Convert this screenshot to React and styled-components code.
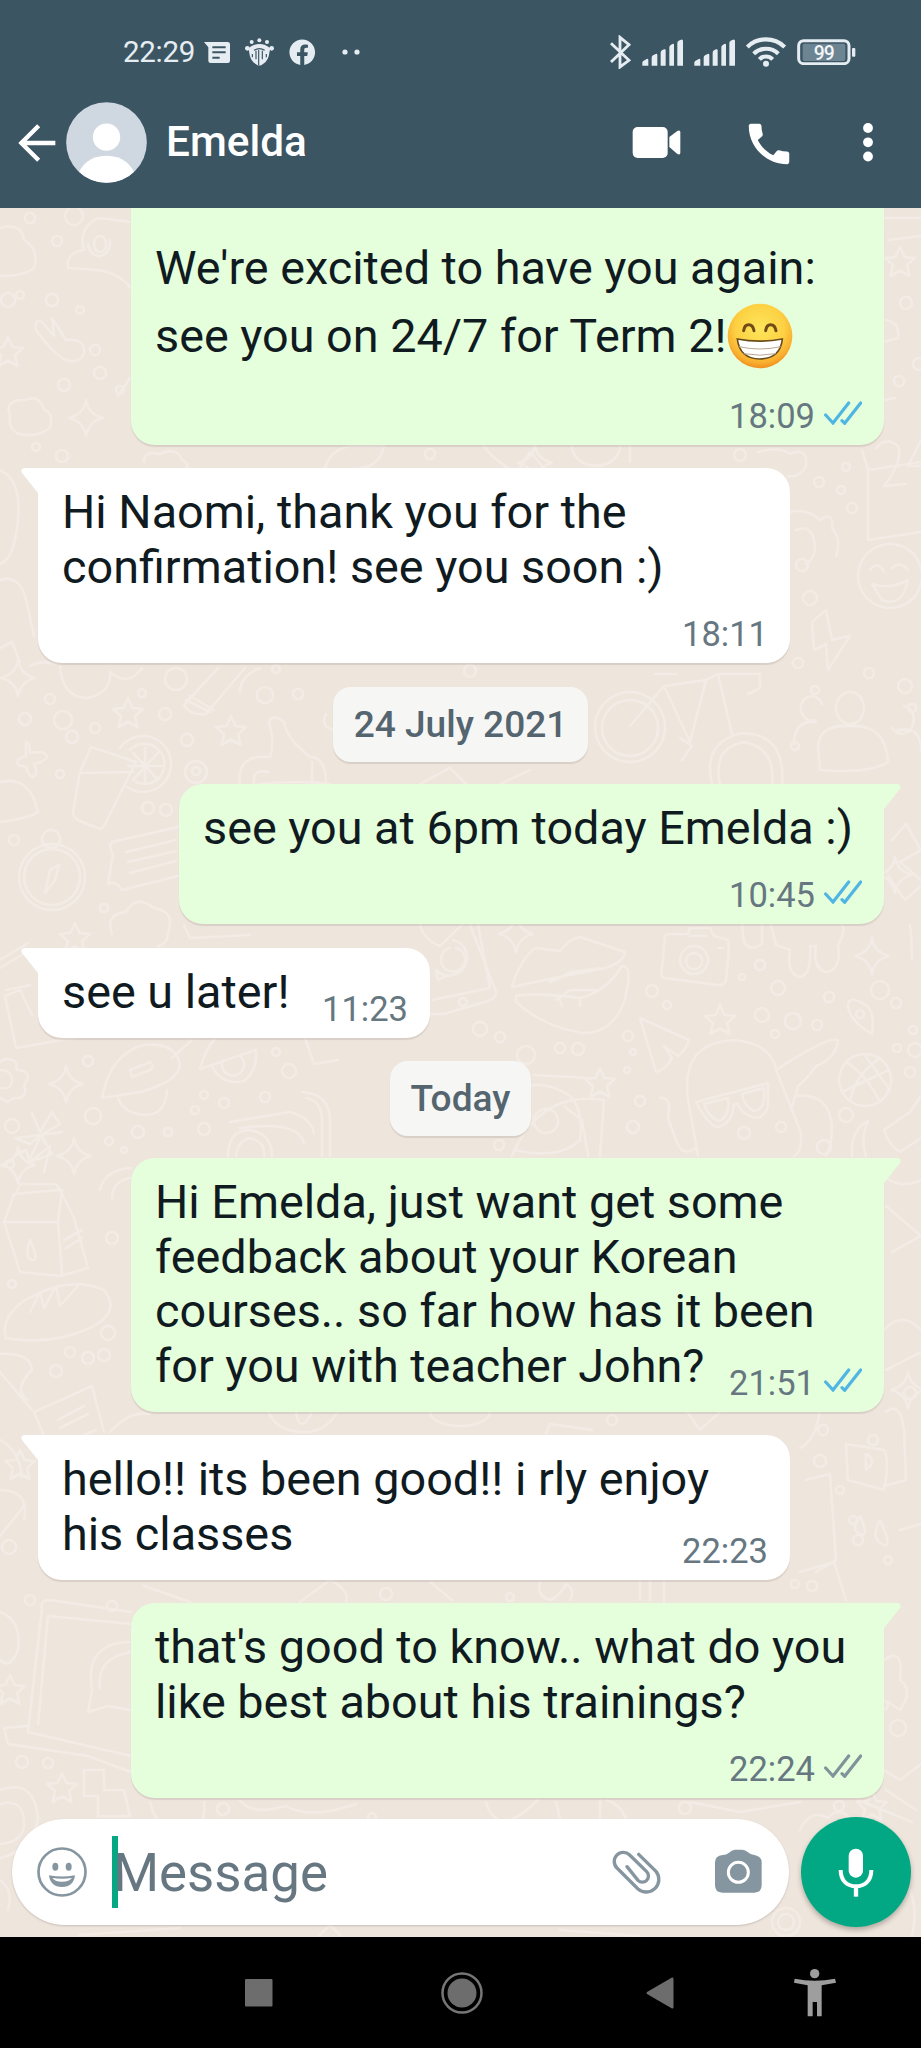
import React from 'react';
import styled, { createGlobalStyle } from 'styled-components';
import { FaFacebook } from 'react-icons/fa';
import { MdCall } from 'react-icons/md';

const GlobalStyle = createGlobalStyle`
  * {
    box-sizing: border-box;
  }
  body {
    margin: 0;
    font-family: Roboto, 'Noto Sans', sans-serif;
  }
  svg {
    display: block;
    flex-shrink: 0;
  }
`;

const Screen = styled.div`
  display: flex;
  flex-direction: column;
  width: 921px;
  height: 2048px;
  overflow: hidden;
  background-color: #000;
`;

const Header = styled.header`
  height: 208px;
  flex-shrink: 0;
  background-color: #3b5563;
  color: #fff;
`;

const StatusBar = styled.div`
  display: flex;
  align-items: center;
  justify-content: space-between;
  height: 102px;
  padding: 2px 65px 0 123px;
  color: #e6edf2;
`;

const StatusGroup = styled.div`
  display: flex;
  align-items: center;
  gap: ${props => props.gap};
`;

const Clock = styled.span`
  width: 66px;
  font-size: 29.5px;
  letter-spacing: -0.3px;
  line-height: 34px;
  white-space: nowrap;
`;

const MoreDots = styled.svg`
  margin-left: 10px;
`;

const AppBar = styled.div`
  display: flex;
  align-items: center;
  height: 81px;
  padding: 0 48px 0 18px;
`;

const Avatar = styled.div`
  margin: 0 19px 0 10px;
`;

const ContactName = styled.h1`
  flex: 1;
  margin: 0 0 1px;
  font-size: 42.3px;
  font-weight: 500;
  line-height: 50px;
`;

const Actions = styled.div`
  display: flex;
  align-items: center;
`;

const CallButton = styled.span`
  display: flex;
  margin: 2px 67px 0 61px;
`;

const Chat = styled.main`
  position: relative;
  display: flex;
  flex-direction: column;
  height: 1729px;
  flex-shrink: 0;
  background-color: #eee5dd;
`;

const Wallpaper = styled.svg`
  position: absolute;
  left: 0;
  top: 0;
  fill: none;
  stroke: #f3ebe5;
  stroke-width: 2.6px;
  stroke-linejoin: round;
  stroke-linecap: round;
`;

const Messages = styled.div`
  position: relative;
  display: flex;
  flex: 1;
  flex-direction: column;
  gap: 23.5px;
`;

const Bubble = styled.article`
  position: relative;
  display: grid;
  align-self: ${props => (props.$out ? 'flex-end' : 'flex-start')};
  width: ${props => props.$size};
  margin: ${props => (props.$out ? '0 37px 0 0' : '0 0 0 38px')};
  padding: ${props => (props.$cut ? '33px' : '17px')} 0 0 24px;
  background-color: ${props => (props.$out ? '#e5fedb' : '#fff')};
  border-radius: ${props => (props.$out ? '24px 0 24px 24px' : '0 24px 24px 24px')};
  ${props => props.$cut && 'border-radius: 0 0 24px 24px;'}
  box-shadow: 0 2px 1px rgba(90, 80, 70, 0.14);
`;

const Tail = styled.svg`
  position: absolute;
  top: 0;
  ${props => (props.$out ? 'right: -17px;' : 'left: -17px;')}
  fill: ${props => (props.$out ? '#e5fedb' : '#fff')};
  ${props => !props.$out && 'transform: scaleX(-1);'}
`;

const Text = styled.div`
  grid-area: 1 / 1;
  padding-bottom: ${props => (props.$tall ? '69px' : '18.5px')};
  font-size: 46.75px;
  line-height: 54.5px;
  color: #101b21;
  white-space: pre;
`;

const Line = styled.p`
  width: fit-content;
  margin: 0;
`;

const EmojiLine = styled(Line)`
  display: flex;
  align-items: center;
  height: 70px;
  margin: 5.5px 0 4.5px;
`;

const Meta = styled.div`
  grid-area: 1 / 1;
  align-self: end;
  justify-self: end;
  display: flex;
  align-items: flex-end;
  gap: 9px;
  padding: 0 22px 9px 0;
  font-size: 34.5px;
  line-height: 40px;
  color: #667781;
  svg {
    margin-bottom: 11px;
  }
`;

const DatePill = styled.div`
  align-self: center;
  height: 75px;
  margin-bottom: -1.5px;
  padding: 0 21px;
  border-radius: 18px;
  background-color: #f6f7f5;
  box-shadow: 0 2px 1px rgba(90, 80, 70, 0.14);
  font-size: 37.1px;
  font-weight: 500;
  line-height: 75px;
  color: #54656f;
`;

const Composer = styled.footer`
  position: relative;
  display: flex;
  align-items: center;
  gap: 12px;
  height: 110px;
  margin: 0 10px 10px 12px;
`;

const InputBox = styled.div`
  display: flex;
  align-items: center;
  width: 777px;
  height: 106px;
  padding: 0 27px 0 25px;
  border-radius: 53px;
  background-color: #fff;
  box-shadow: 0 1px 2px rgba(90, 80, 70, 0.25);
`;

const Caret = styled.span`
  width: 6px;
  height: 72px;
  margin: 0 -5px 0 25px;
  background-color: #06a783;
`;

const Placeholder = styled.span`
  flex: 1;
  padding-top: 2px;
  font-size: 52.8px;
  line-height: 64px;
  color: #667781;
`;

const CameraButton = styled.span`
  margin: 0 0 3px 53px;
`;

const MicButton = styled.div`
  display: flex;
  align-items: center;
  justify-content: center;
  width: 110px;
  height: 110px;
  border-radius: 50%;
  background-color: #02a884;
  box-shadow: 0 3px 5px rgba(60, 60, 50, 0.35);
`;

const NavBar = styled.nav`
  display: flex;
  align-items: center;
  height: 111px;
  padding-left: 244.5px;
  background-color: #000;
`;

const NavItem = styled.span`
  margin-right: ${props => props.$space || '0'};
`;

const NotificationIcons = () => (
  <React.Fragment>
    <svg width="26" height="21" viewBox="612 123 78 63">
      <path d="M612 123H683Q690 123 690 130V179Q690 186 683 186H632Q625 186 625 179V139Z" fill="currentColor" />
      <path d="M637 139H677M637 154H677M637 170H659" stroke="#3b5563" strokeWidth="6" />
    </svg>
    <svg width="29" height="28" viewBox="735 112 87 84">
      <g fill="currentColor">
        <circle cx="755" cy="124" r="6" />
        <circle cx="778" cy="119" r="6" />
        <circle cx="801" cy="124" r="6" />
        <circle cx="742" cy="143" r="7" />
        <circle cx="815" cy="143" r="7" />
        <path d="M745 143Q760 130 778 130T811 143L809 151Q806 181 789 190Q778 199 767 190Q750 181 747 151Z" />
      </g>
      <path
        d="M762 149Q778 139 794 149M768 150V176M776 148V194M787 150V176M757 160V170M799 160V170"
        fill="none"
        stroke="#3b5563"
        strokeWidth="3.5"
      />
    </svg>
    <FaFacebook size={26.5} />
    <MoreDots width="20" height="8" viewBox="0 0 20 8" fill="currentColor">
      <circle cx="4" cy="4" r="2.6" />
      <circle cx="16" cy="4" r="2.6" />
    </MoreDots>
  </React.Fragment>
);

const SignalIcon = () => (
  <svg width="41" height="27" viewBox="546 115 123 81" fill="currentColor">
    <path d="M547 195V186Q547 182 551 180L560 175Q565 173 565 178V195ZM575 195V171Q575 167 579 164L587 160Q592 158 592 163V195ZM602 195V156Q602 152 606 149L612 146Q617 144 617 149V195ZM628 195V140Q628 136 632 133L637 130Q642 128 642 133V195ZM652 195V127Q652 123 656 120L663 117Q669 115 669 121V195Z" />
  </svg>
);

const BluetoothIcon = () => (
  <svg width="21" height="34" viewBox="449 102 63 102" fill="none" stroke="currentColor" strokeWidth="8.5">
    <path d="M452 127L506 178L479 198V109L506 131L452 183" />
  </svg>
);

const WifiIcon = () => (
  <svg width="40" height="30" viewBox="854 109 120 90" fill="none" stroke="currentColor" strokeWidth="12.5">
    <path d="M858 139A80 80 0 0 1 970 139M877 159A54 54 0 0 1 951 159M894 176A28 28 0 0 1 934 176" />
    <circle cx="914" cy="189" r="9" fill="currentColor" stroke="none" />
  </svg>
);

const BatteryIcon = () => (
  <svg width="59" height="26" viewBox="1011 114 177 78">
    <rect x="1028" y="128" width="128" height="52" rx="5" fill="#6d8492" />
    <rect x="1016" y="119" width="151" height="69" rx="15" fill="none" stroke="currentColor" strokeWidth="9" />
    <rect x="1176" y="141" width="10" height="26" rx="3" fill="currentColor" />
    <text x="1091" y="177" fill="#f2f6f8" fontSize="58" fontWeight="500" textAnchor="middle" letterSpacing="-3">
      99
    </text>
  </svg>
);

const BackIcon = () => (
  <svg width="38" height="38" viewBox="56 371 114 114" fill="none" stroke="#fff" strokeWidth="13">
    <path d="M168 428H66M118 376L66 428L118 480" />
  </svg>
);

const Person = () => (
  <svg width="81" height="81" viewBox="198.500 306.500 243 243">
    <clipPath id="avatar">
      <circle cx="320" cy="428" r="121" />
    </clipPath>
    <circle cx="320" cy="428" r="121" fill="#cfd8e0" />
    <circle cx="320" cy="412" r="41" fill="#fff" />
    <path d="M228 540Q250 468 320 468T412 540V560H228Z" fill="#fff" clipPath="url(#avatar)" />
  </svg>
);

const VideoIcon = () => (
  <svg width="49" height="31" viewBox="519 384 147 93" fill="#fff">
    <rect x="521" y="384" width="105" height="93" rx="15" />
    <path d="M631 414L655 396Q664 392 664 400V461Q664 469 655 465L631 444Z" />
  </svg>
);

const MoreIcon = () => (
  <svg width="10" height="39" viewBox="0 0 10 39" fill="#fff">
    <circle cx="5" cy="5" r="4.9" />
    <circle cx="5" cy="19.3" r="4.9" />
    <circle cx="5" cy="33.5" r="4.9" />
  </svg>
);

const Ticks = ({ read }) => (
  <svg
    width="38"
    height="24"
    viewBox="328 332 114 72"
    fill="none"
    stroke={read ? '#4fb6e3' : '#80939b'}
    strokeWidth="9.5"
    strokeLinecap="round"
  >
    <path d="M333 374L355 398L402 338M382 391L390 399L438 338" />
  </svg>
);

const GrinEmoji = () => (
  <svg width="66" height="66" viewBox="48 39 198 198">
    <defs>
      <radialGradient id="face" cx="0.5" cy="0.38" r="0.63">
        <stop offset="0" stopColor="#fde55a" />
        <stop offset="0.6" stopColor="#fdd143" />
        <stop offset="0.85" stopColor="#f9ae2f" />
        <stop offset="1" stopColor="#ee8a1d" />
      </radialGradient>
    </defs>
    <circle cx="147" cy="138" r="97" fill="url(#face)" />
    <path
      d="M98 122Q100 104 113 104T129 122M164 122Q166 104 179 104T195 122"
      fill="none"
      stroke="#704b15"
      strokeWidth="9"
      strokeLinecap="round"
    />
    <path d="M79 147Q146 160 214 147Q208 206 146 207Q86 206 79 147Z" fill="#fff" stroke="#6b4d1b" strokeWidth="5" />
    <path d="M84 170Q146 184 209 170M98 191Q146 200 195 191" fill="none" stroke="#b9a894" strokeWidth="3" />
  </svg>
);

const SmileIcon = () => (
  <svg width="50" height="50" viewBox="111 171 150 150">
    <circle cx="186" cy="246" r="70.5" fill="none" stroke="#8696a0" strokeWidth="8" />
    <g fill="#8696a0">
      <ellipse cx="166" cy="230" rx="9" ry="12" />
      <ellipse cx="206" cy="230" rx="9" ry="12" />
      <path d="M147 256Q186 263 225 256Q221 291 186 291T147 256Z" />
    </g>
    <path d="M157 264Q186 269 216 264Q208 275 186 275T157 264Z" fill="#fff" />
  </svg>
);

const ClipIcon = () => (
  <svg
    width="50"
    height="45"
    viewBox="456 180 150 135"
    fill="none"
    stroke="#8696a0"
    strokeWidth="10"
    strokeLinecap="round"
  >
    <path d="M536 193L588 244A38 38 0 0 1 534 297L471 234A27 27 0 0 1 509 195L560 245A18 18 0 0 1 534 271L501 230" />
  </svg>
);

const CameraIcon = () => (
  <svg width="47" height="44" viewBox="769 175 141 132">
    <path
      d="M792 193Q803 193 811 186T828 177H851Q860 177 868 185T887 193Q909 197 909 215V284Q909 306 887 306H791Q769 306 769 284V215Q769 195 792 193Z"
      fill="#8696a0"
    />
    <circle cx="839" cy="245" r="30" fill="#8696a0" stroke="#fff" strokeWidth="9" />
  </svg>
);

const MicIcon = () => (
  <svg width="36" height="49" viewBox="1135 172 108 147">
    <rect x="1167" y="174" width="43" height="87" rx="21" fill="#fff" />
    <path d="M1143 238C1143 272 1164 287 1189 287S1235 272 1235 238" fill="none" stroke="#fff" strokeWidth="12" />
    <path d="M1189 287V318" stroke="#fff" strokeWidth="13" />
  </svg>
);

const starPath = 'M0 -15L4.5 -5L15 -4L7 3L9.5 14L0 8.5L-9.5 14L-7 3L-15 -4L-4.5 -5Z';
const sparklePath = 'M0 -18Q2 -4 17 0Q3 3 0 18Q-3 3 -17 0Q-2 -4 0 -18Z';

const stars = [
  [128, 713], [231, 731], [75, 938], [720, 1020], [600, 1083], [900, 262], [8, 352], [62, 1788],
  [10, 1690], [20, 1465], [872, 1806],
];

const sparkles = [
  [18, 678], [66, 1084], [74, 1156], [872, 956], [516, 934], [86, 418], [18, 1165], [908, 1390],
  [535, 463], [895, 875],
];

// x, y, radius
const rings = [
  [25, 719, 6], [63, 720, 9], [50, 699, 5], [95, 728, 5], [72, 737, 6], [60, 774, 4], [14, 840, 5],
  [165, 714, 6], [142, 693, 4], [176, 679, 11], [187, 740, 6], [196, 772, 11], [196, 771, 4],
  [265, 695, 8], [298, 694, 5], [276, 669, 4], [148, 808, 6], [166, 810, 6], [104, 908, 4],
  [88, 1061, 5], [93, 1116, 8], [12, 1126, 7], [204, 1095, 4], [224, 1103, 5], [265, 1097, 5],
  [289, 1071, 7], [276, 1052, 4], [195, 1110, 4], [138, 1132, 6], [168, 1132, 4], [204, 1129, 6],
  [109, 1141, 4], [124, 1150, 3], [10, 1164, 4], [480, 1029, 7], [500, 1037, 5], [526, 1055, 9],
  [560, 1048, 5], [578, 1049, 6], [652, 991, 6], [667, 1005, 4], [628, 1036, 5], [633, 1052, 3],
  [627, 1070, 3], [760, 965, 5], [742, 977, 3], [778, 988, 7], [829, 997, 5], [880, 990, 9],
  [896, 1003, 5], [762, 1015, 7], [793, 1021, 8], [775, 1034, 4], [817, 1025, 5], [913, 1030, 4],
  [897, 1048, 4], [915, 1050, 7], [910, 1072, 5], [640, 1101, 5], [633, 1127, 6], [744, 1133, 6],
  [781, 1127, 5], [846, 1115, 7], [824, 1147, 7], [499, 1145, 5], [20, 295, 4], [52, 300, 6],
  [80, 310, 4], [95, 350, 5], [64, 385, 6], [100, 373, 6], [120, 390, 4], [36, 447, 4], [62, 456, 6],
  [8, 300, 7], [906, 303, 6], [919, 364, 6], [899, 381, 5], [740, 455, 6], [846, 467, 4],
  [819, 482, 5], [841, 490, 4], [852, 508, 5], [802, 565, 6], [810, 598, 7], [798, 663, 5],
  [815, 690, 4], [869, 673, 5], [905, 686, 7], [912, 708, 4], [795, 746, 4], [108, 1333, 7],
  [112, 1238, 6], [70, 1352, 5], [88, 1358, 6], [104, 1355, 6], [56, 1371, 6], [12, 1284, 4],
  [910, 1393, 6], [860, 1330, 5], [823, 1430, 5], [820, 1461, 6], [873, 1440, 5], [840, 1490, 4],
  [853, 1520, 4], [858, 1540, 5], [9, 1547, 7], [888, 1560, 4], [22, 1762, 6], [48, 1763, 5],
  [30, 1600, 5], [112, 1606, 5], [898, 1728, 8], [884, 1705, 4], [223, 1809, 6], [685, 1808, 6],
  [839, 1806, 5], [372, 1817, 4], [386, 1594, 6], [510, 1597, 4], [795, 1584, 4], [812, 1586, 5],
  [30, 218, 5], [57, 241, 5], [74, 216, 9], [612, 1420, 5], [430, 454, 5], [470, 671, 6],
];

const lineArt = [
  // drink with a slice of lemon
  'M91 747L80 772L73 812Q73 818 80 821L100 829Q104 828 107 820L136 762L91 747M82 773L133 772',
  'M120 748A28 28 0 1 1 127 787M130 750A20 20 0 1 1 136 782M145 748V784M128 766H162M133 753L158 780M158 753L133 780',
  // compass
  'M52 844A33 33 0 1 0 52.1 844M52 849A28 28 0 1 0 52.1 849M51 830A9 9 0 1 0 51.1 830M45 893L50 870L59 865L55 880Z',
  'M26 742Q30 742 30 753Q46 750 47 757Q46 761 34 764Q39 774 33 777Q28 776 26 766Q18 767 17 762Q18 758 26 756Z',
  // ticket
  'M178 827L112 842Q108 846 113 854L108 884Q116 880 122 890L178 876M126 852L176 840M128 862L176 851M130 873L176 861',
  'M0 782Q30 775 38 812Q30 818 0 822M112 934Q105 914 126 912Q136 894 154 908Q176 912 168 932Q168 944 158 946',
  // mitten and thumb
  'M60 666Q62 698 88 698Q112 692 110 672Q128 688 142 668M240 784Q236 754 270 757Q275 745 269 722Q272 713 284 722Q286 738 310 757Q326 757 326 784M254 784Q252 768 268 772M312 762V784',
  'M218 668L184 705Q190 716 206 714L245 668M190 696L214 710M186 700L210 712',
  'M0 960L28 943M0 968L32 949M5 996L20 990L32 1015M5 996L16 1048L84 1036M6 990L30 985M184 925L190 938L250 935',
  // planets
  'M102 1098Q110 1054 144 1045Q176 1042 180 1065Q178 1082 140 1092ZM118 1098Q124 1114 146 1115Q166 1114 167 1090M130 1070L150 1062Q156 1066 150 1070L132 1077Z',
  'M200 1069Q206 1048 214 1040M200 1069L256 1050M212 1066Q222 1086 244 1081Q258 1070 256 1050M223 1060A11 11 0 1 0 240 1056M172 1058L192 1040M305 1038L314 1064L338 1060',
  'M0 1062Q6 1056 16 1062L17 1070Q28 1070 28 1078L24 1086Q28 1094 20 1098L14 1098L8 1102L0 1098M0 1070Q12 1070 12 1080T0 1088',
  'M32 1113L40 1132L52 1112L60 1124L41 1135L62 1132M41 1135L15 1138L30 1144L41 1135L28 1163L52 1154Z',
  // roller skate
  'M228 1156Q228 1130 250 1130Q272 1134 272 1156M236 1156Q238 1140 250 1138Q266 1142 264 1156M230 1122L290 1112Q312 1118 314 1134M240 1128Q300 1120 304 1144M302 1092Q330 1094 330 1120V1156M306 1098Q322 1100 322 1122V1156',
  // phone
  'M470 925L496 992Q496 998 488 1001L444 1014L430 1014M478 925L490 988L432 1000M453 940A18 18 0 1 1 436 970L438 980L446 976M450 948A12 12 0 1 0 456 948M463 998A4 4 0 1 0 463.1 998',
  // lips
  'M512 987Q520 960 535 948L560 951Q570 938 580 937L625 952Q624 962 605 968L545 980ZM516 996Q530 992 580 998Q606 992 622 966Q634 966 624 1002Q612 1034 582 1033Q542 1026 516 1002ZM550 982L572 972L600 968M556 1000L570 990L596 990M560 1000L562 1006M580 998V1006',
  // camera
  'M668 934L688 934L690 928H710L714 936L728 940Q730 944 726 980Q724 986 718 985L664 978Q660 976 662 968L665 936ZM694 946A14 14 0 1 0 694.1 946M694 953A8 8 0 1 0 694.1 953M690 936H706M718 948h5',
  'M742 925L744 942Q750 952 762 944L762 925M771 925L776 945L790 950Q786 974 800 977Q812 974 810 946H816Q812 968 826 972Q842 970 838 945Q846 930 842 925',
  'M640 1018L656 1072Q666 1070 672 1058L664 1046L678 1056Q686 1050 689 1040ZM848 1004Q850 996 862 1003Q876 1008 872 1034Q848 1020 848 1004ZM860 1010A4 4 0 1 0 860.1 1010',
  // ghost with glasses
  'M698 1156L688 1100Q680 1042 735 1040Q772 1044 776 1070L800 1130Q804 1150 794 1156M696 1102L768 1083L768 1106Q764 1120 752 1117Q740 1112 738 1104L734 1104Q732 1126 716 1127Q706 1122 696 1102M704 1104L728 1098Q730 1118 718 1121Q708 1116 704 1104ZM742 1094L764 1088Q766 1110 754 1111Q744 1106 742 1094Z',
  'M776 1070Q828 1036 838 1040Q836 1058 816 1066Q806 1080 798 1086Q796 1096 792 1106M796 1096Q830 1092 832 1128Q832 1144 826 1156',
  // ball
  'M865 1054A26 26 0 1 0 865.1 1054M842 1092L889 1070M846 1062Q866 1074 880 1102M880 1058Q856 1074 850 1100M864 1054L890 1090',
  'M512 1156Q540 1090 604 1100L600 1156M534 1075L586 1078M514 1092Q540 1076 570 1096Q584 1110 580 1140Q560 1160 514 1150M546 1109A12 12 0 1 0 546.1 1109M564 1106L582 1120L588 1156M660 1098Q672 1096 668 1118L676 1140Q682 1158 696 1148',
  'M921 1096L910 1112L884 1130Q888 1144 900 1152L921 1138M852 1156Q850 1130 868 1121Q860 1140 866 1156M910 925Q912 940 912 960',
  // clouds and mitten at the top left
  'M0 228Q22 222 24 240Q40 250 34 268Q24 276 0 276M68 268Q66 252 84 250Q78 228 98 218L131 222M68 268L96 270Q118 272 131 288M88 244A11 14 0 1 0 110 240M100 236A6 8 0 1 0 100.1 236',
  'M36 330Q34 318 42 322L54 336L52 318L66 340Q86 338 84 354Q78 366 62 358Q50 350 36 330M10 416Q4 400 24 400Q40 394 44 410Q54 412 50 428Q36 438 20 434Q8 430 10 416M118 396L130 378',
  'M144 462Q144 450 160 454Q176 446 182 460Q190 464 186 468M325 468Q330 450 350 446H384Q380 466 360 468M484 446Q490 456 508 468M520 468L530 452L544 468M572 446A22 18 0 0 0 620 446M630 446V462',
  'M758 452Q780 446 790 454Q808 446 806 466Q800 478 788 476M862 450L868 470V540L921 532M868 470L921 462M876 448Q886 436 898 446Q904 460 884 486L906 484M921 440L908 466H921',
  'M790 512Q808 508 820 520Q834 510 832 528Q842 540 836 556M796 530Q810 524 814 540T806 564M890 544A32 32 0 1 0 890.1 544M870 570Q878 560 884 572M892 568Q900 560 908 570M872 584Q890 590 908 580Q902 608 882 600Z',
  'M812 622L826 610L832 640L850 636L828 670L826 644L814 650ZM884 218H921M888 240L921 236M884 400L895 398M886 320Q900 322 898 338L884 342M0 470Q22 480 18 520Q14 560 0 564M0 580Q20 574 26 600T34 636',
  'M0 648L12 642L20 662M30 666Q40 660 56 664',
  // bicycle
  'M630 692A35 35 0 1 0 630.1 692M630 700A28 28 0 1 0 630.1 700M712 784Q702 742 742 733Q786 734 782 784M720 784Q712 748 744 742Q776 748 772 784M630 726L664 686L706 680L690 742L664 686M655 674H676M706 680L718 674L732 734M718 674H760V688L748 694M680 738L692 746L682 760',
  // people
  'M814 720A11 12 0 1 1 822 704M850 692A14 16 0 1 0 850.1 692M818 746Q820 724 850 726Q886 724 888 762Q870 774 820 770ZM794 744Q794 720 816 722M892 728A12 14 0 1 0 904 706M898 730Q921 726 921 750',
  'M240 692Q240 676 260 668M258 784Q300 780 330 784M420 784L450 768L466 784M500 784L530 770M326 714Q320 726 333 730M892 840L906 824L921 850L900 862L921 880M888 876L905 900L921 886',
  'M420 925Q424 940 440 946L462 925',
  // milk carton and bread
  'M4 1222L14 1194L60 1190L74 1218L88 1268L60 1276L20 1272L4 1222L58 1222L62 1274M16 1194L20 1184H56L60 1190M58 1222L62 1190M30 1240Q24 1258 32 1260T30 1240M64 1240L82 1230M66 1248L82 1238',
  'M6 1338Q0 1320 22 1302Q68 1274 104 1290Q122 1312 90 1328Q50 1346 6 1338M30 1312L40 1292L44 1308L56 1286L60 1306L78 1286M100 1190Q104 1170 131 1168M112 1200Q112 1180 131 1178M14 1156L26 1150L30 1162L50 1146L44 1172',
  'M0 1354Q30 1352 32 1370Q12 1390 28 1400M0 1372L32 1410M34 1412L92 1386L104 1432M34 1412L50 1450L96 1430M58 1420L84 1406M60 1428L88 1414M0 1440Q20 1450 22 1478M0 1490Q30 1490 24 1520',
  'M0 1536L24 1506M110 1432Q130 1410 150 1414M268 1410Q276 1434 310 1432Q330 1428 338 1410M296 1412Q300 1436 312 1412M430 1412A30 14 0 0 0 490 1412M546 1434L550 1424L592 1430M686 1410L700 1430L720 1412',
  'M886 1412Q900 1400 904 1430L906 1480L884 1486M800 1448Q816 1440 820 1410M846 1444L884 1450Q890 1460 884 1490L848 1480ZM866 1454V1470Q878 1460 866 1454M806 1480L830 1474L836 1560L816 1572M860 1516Q850 1530 860 1534T860 1516M880 1520Q870 1538 882 1544T880 1520',
  'M884 1176Q900 1190 921 1180M886 1206L921 1236L892 1252M884 1330Q902 1310 921 1330M886 1370L921 1352M900 1530L921 1524M800 1572L834 1562L846 1600',
  // laptop
  'M42 1608Q40 1600 50 1600L131 1612M42 1608L28 1732L131 1756M48 1616L131 1624M48 1616L38 1724M4 1728L28 1726M4 1728L8 1744L88 1756L131 1772M92 1690Q84 1642 131 1642M92 1690L88 1712L108 1706L131 1710M100 1688Q96 1658 131 1652',
  'M0 1612Q22 1620 18 1650Q10 1670 0 1660M0 1790Q34 1778 38 1818Q34 1850 0 1858M0 1804Q22 1798 24 1820T0 1844M84 1770H104V1790H124L130 1816H98V1796H84ZM150 1802Q156 1826 170 1830M204 1802Q206 1820 198 1826',
  'M240 1800Q250 1816 286 1806Q310 1820 356 1804M486 1802Q490 1818 504 1822Q520 1818 538 1800M556 1802L560 1818M600 1800V1818M626 1818Q618 1802 606 1800M690 1802L740 1812L800 1802M858 1800L912 1822M886 1790L916 1810',
  'M800 1830Q810 1808 828 1818Q838 1806 850 1818M884 1660Q904 1646 900 1680Q914 1690 900 1710L888 1702M884 1770L900 1780L921 1764M0 1880Q14 1890 8 1910M80 1935L180 1928M320 1935L330 1925L340 1935M560 1930L640 1936M786 1908A14 14 0 1 0 786.1 1908M786 1914A8 8 0 1 0 786.1 1914M910 1890Q918 1910 912 1936',
  'M300 1602L330 1580Q350 1590 346 1602M430 1582L452 1600M540 1582Q536 1596 550 1600Q560 1596 566 1584Q576 1590 570 1600M640 1582V1600M650 1580V1600M664 1582V1602M144 1586L190 1602',
];

const ChatWallpaper = () => (
  <Wallpaper width="921" height="1729" viewBox="0 208 921 1729">
    {lineArt.map(d => (
      <path key={d} d={d} />
    ))}
    {stars.map(([x, y]) => (
      <path key={`${x}-${y}`} d={starPath} transform={`translate(${x} ${y})`} />
    ))}
    {sparkles.map(([x, y]) => (
      <path key={`${x}-${y}`} d={sparklePath} transform={`translate(${x} ${y})`} />
    ))}
    {rings.map(([x, y, r]) => (
      <circle key={`${x}-${y}-${r}`} cx={x} cy={y} r={r} />
    ))}
  </Wallpaper>
);

const Message = ({ out, size, time, read, tall, cut, lines, children }) => (
  <Bubble $out={out} $size={size} $cut={cut}>
    {!cut && (
      <Tail $out={out} width="18" height="26" viewBox="0 0 18 26">
        <path d="M0 0H15Q19 1 17 5L1 25H0Z" />
      </Tail>
    )}
    <Text $tall={tall}>
      {lines.map(line => (
        <Line key={line}>{line}</Line>
      ))}
      {children}
    </Text>
    <Meta>
      <span>{time}</span>
      {out && <Ticks read={read} />}
    </Meta>
  </Bubble>
);

const App = () => (
  <Screen>
    <GlobalStyle />
    <Header>
      <StatusBar>
        <StatusGroup gap="15px">
          <Clock>22:29</Clock>
          <NotificationIcons />
        </StatusGroup>
        <StatusGroup gap="11px">
          <BluetoothIcon />
          <SignalIcon />
          <SignalIcon />
          <WifiIcon />
          <BatteryIcon />
        </StatusGroup>
      </StatusBar>
      <AppBar>
        <BackIcon />
        <Avatar>
          <Person />
        </Avatar>
        <ContactName>Emelda</ContactName>
        <Actions>
          <VideoIcon />
          <CallButton>
            <MdCall size={54} />
          </CallButton>
          <MoreIcon />
        </Actions>
      </AppBar>
    </Header>
    <Chat>
      <ChatWallpaper />
      <Messages>
        <Message out cut tall read size="753px" time="18:09" lines={["We're excited to have you again:"]}>
          <EmojiLine>
            see you on 24/7 for Term 2!
            <GrinEmoji />
          </EmojiLine>
        </Message>
        <Message
          tall
          size="752px"
          time="18:11"
          lines={['Hi Naomi, thank you for the', 'confirmation! see you soon :)']}
        />
        <DatePill>24 July 2021</DatePill>
        <Message out tall read size="705px" time="10:45" lines={['see you at 6pm today Emelda :)']} />
        <Message size="392px" time="11:23" lines={['see u later!']} />
        <DatePill>Today</DatePill>
        <Message
          out
          read
          size="753px"
          time="21:51"
          lines={[
            'Hi Emelda, just want get some',
            'feedback about your Korean',
            'courses.. so far how has it been',
            'for you with teacher John?',
          ]}
        />
        <Message size="752px" time="22:23" lines={['hello!! its been good!! i rly enjoy', 'his classes']} />
        <Message
          out
          tall
          size="753px"
          time="22:24"
          lines={["that's good to know.. what do you", 'like best about his trainings?']}
        />
      </Messages>
      <Composer>
        <InputBox>
          <SmileIcon />
          <Caret />
          <Placeholder>Message</Placeholder>
          <ClipIcon />
          <CameraButton>
            <CameraIcon />
          </CameraButton>
        </InputBox>
        <MicButton>
          <MicIcon />
        </MicButton>
      </Composer>
    </Chat>
    <NavBar>
      <NavItem $space="168px">
        <svg width="28" height="28" viewBox="0 0 28 28">
          <rect width="27.5" height="27.5" rx="1" fill="#6d6d6d" />
        </svg>
      </NavItem>
      <NavItem $space="163.5px">
        <svg width="42" height="42" viewBox="0 0 42 42">
          <circle cx="21" cy="21" r="19.5" fill="none" stroke="#767676" strokeWidth="2.5" />
          <circle cx="21" cy="21" r="14.5" fill="#6d6d6d" />
        </svg>
      </NavItem>
      <NavItem $space="120px">
        <svg width="28" height="32" viewBox="0 0 28 32">
          <path d="M26 0.5Q27.5 0 27.5 2V30Q27.5 32 26 31.5L1 17Q0 16 1 15Z" fill="#6d6d6d" />
        </svg>
      </NavItem>
      <NavItem>
        <svg width="42" height="48" viewBox="1001 537 126 144" fill="#9e9e9e">
          <circle cx="1063" cy="551" r="14" />
          <path d="M1003 566Q1063 578 1124 566L1127 578L1084 586V679H1070V636H1057V679H1042V586L1001 578Z" />
        </svg>
      </NavItem>
    </NavBar>
  </Screen>
);

export default App;
